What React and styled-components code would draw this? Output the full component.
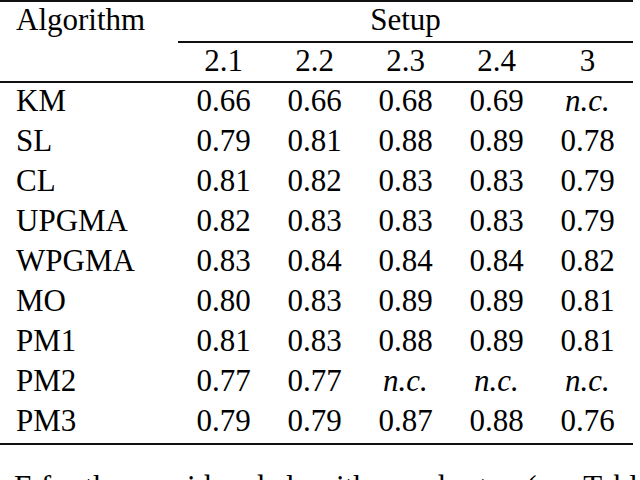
import React from "react";
import styled, { createGlobalStyle } from "styled-components";

const Global = createGlobalStyle`
  body {
    margin: 0;
  }
`;

const Page = styled.div`
  width: 640px;
  height: 480px;
`;

const Table = styled.div`
  display: grid;
  grid-template-columns: 178px repeat(5, 91px);
  width: 633px;
  border-top: 2px solid #111;
  border-bottom: 2px solid #111;
`;

const Cell = styled.div`
  font-family: "Liberation Serif", "DejaVu Serif", serif;
  font-size: 31px;
  line-height: 36px;
  padding-top: 0px;
  padding-bottom: ${(p) => p.$pb}px;
  white-space: nowrap;
  text-align: ${(p) => (p.$label ? "left" : "center")};
  padding-left: ${(p) => (p.$label ? 16 : 0)}px;
  border-bottom: ${(p) => p.$rule || 0}px solid #111;
  ${(p) => (p.$italic ? "font-style: italic;" : "")}
`;

const SpanCell = styled(Cell)`
  grid-column: 2 / span 5;
`;

const Caption = styled.div`
  font-family: "Liberation Serif", "DejaVu Serif", serif;
  font-size: 31px;
  line-height: 36px;
  margin: 24px 0 0 14px;
  white-space: nowrap;
`;

const setups = ["2.1", "2.2", "2.3", "2.4", "3"];

const rows = [
  ["KM", "0.66", "0.66", "0.68", "0.69", "n.c."],
  ["SL", "0.79", "0.81", "0.88", "0.89", "0.78"],
  ["CL", "0.81", "0.82", "0.83", "0.83", "0.79"],
  ["UPGMA", "0.82", "0.83", "0.83", "0.83", "0.79"],
  ["WPGMA", "0.83", "0.84", "0.84", "0.84", "0.82"],
  ["MO", "0.80", "0.83", "0.89", "0.89", "0.81"],
  ["PM1", "0.81", "0.83", "0.88", "0.89", "0.81"],
  ["PM2", "0.77", "0.77", "n.c.", "n.c.", "n.c."],
  ["PM3", "0.79", "0.79", "0.87", "0.88", "0.76"],
];

export default function App() {
  return (
    <Page>
      <Global />
      <Table>
        <Cell $label $pb={3}>Algorithm</Cell>
        <SpanCell $pb={3} $rule={2}>Setup</SpanCell>
        <Cell $label $pb={2} $rule={2}>{"\u00a0"}</Cell>
        {setups.map((s) => (
          <Cell key={s} $pb={2} $rule={2}>{s}</Cell>
        ))}
        {rows.map((r) =>
          r.map((v, i) => (
            <Cell
              key={r[0] + i}
              $label={i === 0}
              $italic={v === "n.c."}
              $pb={4}
            >
              {v}
            </Cell>
          ))
        )}
      </Table>
      <Caption>E for the considered algorithm and setup (see Table</Caption>
    </Page>
  );
}
